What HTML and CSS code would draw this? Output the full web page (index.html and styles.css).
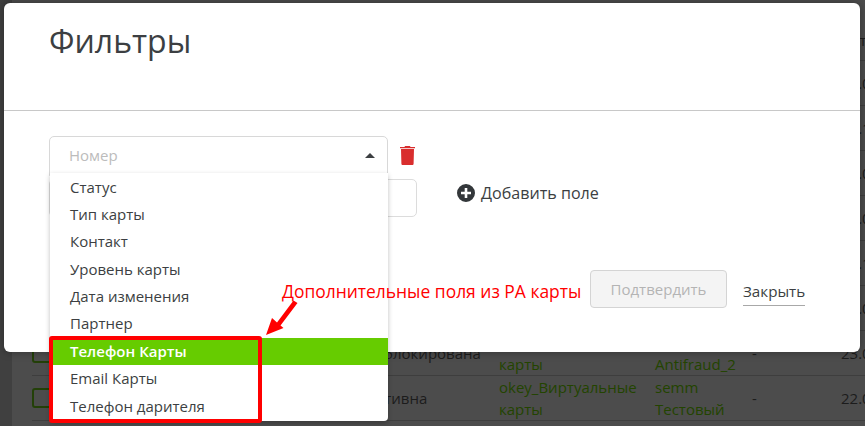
FILE: index.html
```
<!DOCTYPE html>
<html lang="ru">
<head>
<meta charset="utf-8">
<title>Фильтры</title>
<link rel="stylesheet" href="styles.css">
</head>
<body>
<div class="page">
  <div class="table">
    <div class="head"><span class="date">Дата</span></div>
    <div class="row"><span class="date">23.05</span></div>
    <div class="row"><span class="date">23.11</span></div>
    <div class="row"><span class="date">23.05</span></div>
    <div class="row"><span class="date">23.05</span></div>
    <div class="row"><span class="date">23.11</span></div>
    <div class="row"><span class="date">23.05</span></div>
    <div class="row">
      <span class="box"></span>
      <span class="status">Заблокирована</span>
      <span class="link type"><span>okey_Виртуальные</span><span>карты</span></span>
      <span class="link partner"><span>semm</span><span>Antifraud_2</span></span>
      <span class="dash">-</span>
      <span class="date">23.05</span>
    </div>
    <div class="row">
      <span class="box"></span>
      <span class="status">Активна</span>
      <span class="link type"><span>okey_Виртуальные</span><span>карты</span></span>
      <span class="link partner"><span>semm</span><span>Тестовый</span></span>
      <span class="dash">-</span>
      <span class="date">22.05</span>
    </div>
  </div>

  <div class="modal">
    <h1 class="title">Фильтры</h1>
    <div class="body">
      <div class="fields">
        <div class="select-row">
          <div class="select">
            <span class="placeholder">Номер</span>
            <span class="caret"></span>
          </div>
          <svg class="trash" viewBox="0 0 15 19" aria-hidden="true"><path d="M5 0h5l.5 1H15v1.300H0V1h4.500zM1 3h13l-.4 14.700c0 .8-.6 1.300-1.300 1.300H2.700c-.7 0-1.300-.5-1.300-1.300z"/></svg>
        </div>
        <div class="value-row">
          <div class="input"></div>
          <div class="add">
            <svg class="plus" viewBox="0 0 18 18" aria-hidden="true"><path d="M9 0a9 9 0 1 0 0 18A9 9 0 0 0 9 0zm5 10.300h-3.700V14H7.700v-3.700H4V7.700h3.700V4h2.600v3.700H14z"/></svg>
            <span>Добавить поле</span>
          </div>
        </div>
      </div>
      <div class="actions">
        <button class="confirm" disabled>Подтвердить</button>
        <span class="close">Закрыть</span>
      </div>
    </div>
  </div>

  <ul class="menu">
    <li>Статус</li>
    <li>Тип карты</li>
    <li>Контакт</li>
    <li>Уровень карты</li>
    <li>Дата изменения</li>
    <li>Партнер</li>
    <li class="active">Телефон Карты</li>
    <li>Email Карты</li>
    <li>Телефон дарителя</li>
  </ul>

  <div class="note">Дополнительные поля из РА карты</div>
  <svg class="arrow" viewBox="0 0 35 38" aria-hidden="true"><path d="M1 36L7 19 12 23.500 28.500 1.500 32.500 4 15.500 26.500 18.500 29z"/></svg>
  <div class="highlight"></div>
</div>
</body>
</html>
```
FILE: styles.css
```
* { box-sizing: border-box; }
html, body { margin: 0; padding: 0; }
body {
  width: 865px;
  height: 426px;
  overflow: hidden;
  background: #4c4c4c;
  font-family: "Open Sans", sans-serif;
  color: #3c3f42;
}
.page {
  position: relative;
  width: 865px;
  height: 426px;
  overflow: hidden;
}
.table {
  margin-left: 12px;
  padding-left: 20px;
  background: #4c4c4c;
  color: #1c1c1c;
  font-size: 15px;
  line-height: 22px;
  height: 426px;
  box-shadow: -12px 0 0 #404040;
}
.head {
  height: 61px;
  padding: 29px 0 0 809px;
  border-bottom: 1px solid #3e3e3e;
}
.row {
  display: grid;
  grid-template-columns: 335px 132px 156px 97px 89px 60px;
  align-items: center;
  height: 45px;
  border-bottom: 1px solid #3e3e3e;
}
.box {
  width: 22px;
  height: 20px;
  border: 2px solid #234008;
  border-radius: 3px;
}
.status { white-space: nowrap; }
.link { display: flex; flex-direction: column; color: #234400; white-space: nowrap; }
.date { grid-column: 6; white-space: nowrap; }
.modal {
  position: absolute;
  left: 4px;
  top: 3px;
  width: 856px;
  height: 349px;
  background: #fff;
  border-radius: 6px;
  box-shadow: 0 0 8px rgba(0,0,0,.35);
}
.title {
  margin: 0;
  height: 108px;
  padding: 16px 45px 0;
  font-size: 32px;
  font-weight: 400;
  line-height: 44px;
  color: #3c3f42;
  border-bottom: 1px solid #c8c8c8;
}
.body { padding: 25px 45px 0; }
.select-row { display: flex; align-items: center; gap: 12px; }
.select {
  width: 339px;
  height: 40px;
  padding: 0 12px 2px 19px;
  display: flex;
  align-items: center;
  justify-content: space-between;
  border: 1px solid #d8d8d8;
  border-radius: 5px 5px 0 0;
  font-size: 15px;
}
.placeholder { color: #bcbcbc; }
.caret {
  width: 0;
  height: 0;
  border-left: 5px solid transparent;
  border-right: 5px solid transparent;
  border-bottom: 5px solid #3c3f42;
}
.trash { width: 15px; height: 19px; fill: #d92e2e; margin-top: -2px; }
.value-row { display: flex; align-items: flex-start; margin-top: 3px; }
.input {
  width: 368px;
  height: 38px;
  border: 1px solid #dcdcdc;
  border-radius: 5px;
}
.add {
  display: flex;
  align-items: center;
  gap: 6px;
  margin: 3px 0 0 40px;
  font-size: 16.100px;
}
.plus { width: 18px; height: 18px; fill: #33373a; }
.actions {
  display: flex;
  align-items: center;
  margin: 53px 0 0 541px;
}
.confirm {
  width: 137px;
  height: 38px;
  padding: 0;
  background: #f4f4f4;
  border: 1px solid #d4d4d4;
  border-radius: 4px;
  color: #b4b4b4;
  font-family: inherit;
  font-size: 15px;
}
.close {
  margin: 9px 0 0 16px;
  padding-bottom: 4px;
  border-bottom: 1px solid #a8a8a8;
  font-size: 15.200px;
}
.menu {
  position: absolute;
  left: 50px;
  top: 173px;
  width: 338px;
  height: 248px;
  margin: 0;
  padding: .5px 0 0;
  list-style: none;
  background: #fff;
  border-radius: 0 0 4px 4px;
  box-shadow: 0 2px 5px rgba(0,0,0,.25);
  font-size: 15px;
}
.menu li {
  height: 27.400px;
  line-height: 26.400px;
  padding-left: 20px;
}
.menu .active { background: #66cc00; color: #fff; font-weight: 600; }
.note {
  position: absolute;
  left: 282px;
  top: 280px;
  font-size: 17.450px;
  line-height: 22px;
  color: #ff0000;
  white-space: nowrap;
}
.arrow {
  position: absolute;
  left: 265px;
  top: 299px;
  width: 35px;
  height: 38px;
  fill: #ff0000;
}
.highlight {
  position: absolute;
  left: 49px;
  top: 336px;
  width: 213px;
  height: 87px;
  border: 4px solid #ff0000;
  border-radius: 3px;
}
```
